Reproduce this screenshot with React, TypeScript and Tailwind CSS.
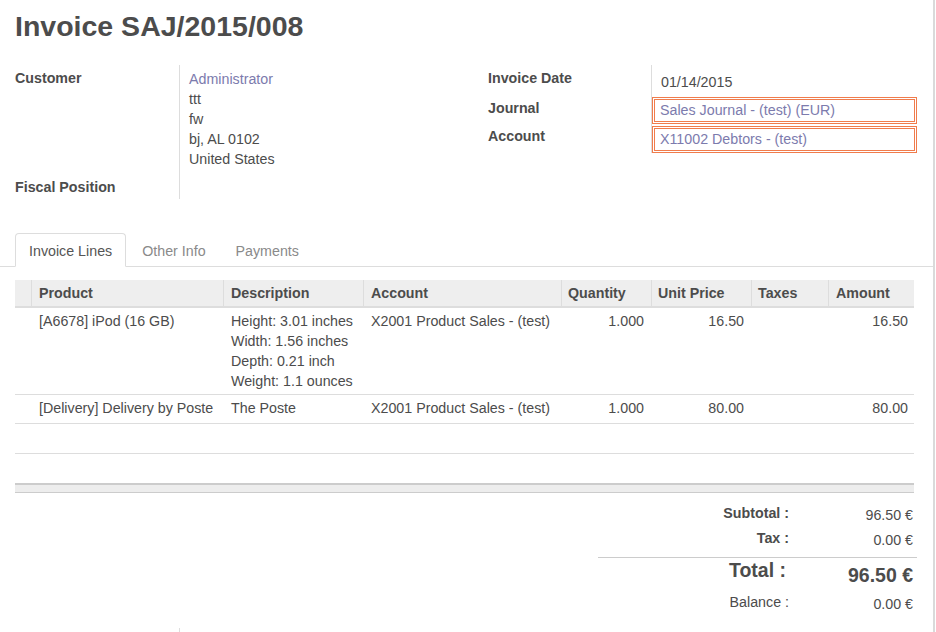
import React from "react";

const rows = [
  {
    product: "[A6678] iPod (16 GB)",
    desc: ["Height: 3.01 inches", "Width: 1.56 inches", "Depth: 0.21 inch", "Weight: 1.1 ounces"],
    account: "X2001 Product Sales - (test)",
    qty: "1.000",
    price: "16.50",
    taxes: "",
    amount: "16.50",
  },
  {
    product: "[Delivery] Delivery by Poste",
    desc: ["The Poste"],
    account: "X2001 Product Sales - (test)",
    qty: "1.000",
    price: "80.00",
    taxes: "",
    amount: "80.00",
  },
];

const cols = "grid grid-cols-[16px_192px_140px_198px_90px_100px_77px_86px]";

export default function App() {
  return (
    <div className="w-[936px] h-[632px] overflow-hidden bg-white flex font-['Liberation_Sans',Arial,sans-serif] text-[14.25px] leading-5 text-[#4c4c4c]">
      <div className="w-[935px] shrink-0 border-r-2 border-[#dadada]">
        {/* Title */}
        <div className="pl-[15px] pt-[10px]">
          <h1 className="text-[28.5px] leading-[32px] font-bold text-[#4c4c4c]">Invoice SAJ/2015/008</h1>
        </div>

        {/* Form groups */}
        <div className="flex items-start pl-[15px] mt-[23px]">
          <div className="w-[473px] grid grid-cols-[164px_1fr] content-start">
            <div className="pt-[3px] font-bold">Customer</div>
            <div className="border-l border-[#dddddd] pl-[9px] pt-[4px]">
              <div className="text-[#7c7bad]">Administrator</div>
              <div>ttt</div>
              <div>fw</div>
              <div>bj, AL 0102</div>
              <div>United States</div>
            </div>
            <div className="pt-[8px] font-bold">Fiscal Position</div>
            <div className="border-l border-[#dddddd] h-[30px]"></div>
          </div>
          <div className="w-[429px] grid grid-cols-[163px_1fr] content-start">
            <div className="pt-[3px] font-bold">Invoice Date</div>
            <div className="border-l border-[#dddddd] pl-[9px] pt-[7px] pb-[5px]">01/14/2015</div>
            <div className="pt-[1px] font-bold">Journal</div>
            <div className="border-l border-[#dddddd] pb-[2px]">
              <div className="border-[3px] border-double border-[#f07c4c] pl-[5px] pb-[1px] text-[#7c7bad]">
                Sales Journal - (test) (EUR)
              </div>
            </div>
            <div className="font-bold">Account</div>
            <div className="border-l border-[#dddddd]">
              <div className="border-[3px] border-double border-[#f07c4c] pl-[5px] pb-[1px] text-[#7c7bad]">
                X11002 Debtors - (test)
              </div>
            </div>
          </div>
        </div>

        {/* Tabs */}
        <div className="mt-[34px] flex pl-[15px] border-b border-[#dddddd]">
          <div className="-mb-px mr-[2px] border border-[#dddddd] border-b-white bg-white rounded-t-[4px] px-[13px] pt-[7px] pb-[5px] text-[#555555]">
            Invoice Lines
          </div>
          <div className="-mb-px mr-[2px] border border-transparent px-[13px] pt-[7px] pb-[5px] text-[#8a8a8a]">
            Other Info
          </div>
          <div className="-mb-px mr-[2px] border border-transparent px-[13px] pt-[7px] pb-[5px] text-[#8a8a8a]">
            Payments
          </div>
        </div>

        {/* Table */}
        <div className="ml-[15px] w-[899px] mt-[13px]">
          <div className={`${cols} bg-[#eeeeee] h-[28px] border-b-2 border-[#dddddd] font-bold`}>
            <div></div>
            <div className="border-l border-[#dddddd] pl-[7px] pt-[3px]">Product</div>
            <div className="border-l border-[#dddddd] pl-[7px] pt-[3px]">Description</div>
            <div className="border-l border-[#dddddd] pl-[7px] pt-[3px]">Account</div>
            <div className="border-l border-[#dddddd] pl-[6px] pt-[3px]">Quantity</div>
            <div className="border-l border-[#dddddd] pl-[6px] pt-[3px]">Unit Price</div>
            <div className="border-l border-[#dddddd] pl-[6px] pt-[3px]">Taxes</div>
            <div className="border-l border-[#dddddd] pl-[7px] pt-[3px]">Amount</div>
          </div>
          {rows.map((r, i) => (
            <div key={i} className={`${cols} min-h-[29px] border-b border-[#dddddd]`}>
              <div></div>
              <div className="pl-[8px] pt-[3px] pb-[3px]">{r.product}</div>
              <div className="pl-[8px] pt-[3px] pb-[3px]">
                {r.desc.map((d) => (
                  <div key={d}>{d}</div>
                ))}
              </div>
              <div className="pl-[8px] pt-[3px] pb-[3px]">{r.account}</div>
              <div className="pr-[7px] pt-[3px] pb-[3px] text-right">{r.qty}</div>
              <div className="pr-[7px] pt-[3px] pb-[3px] text-right">{r.price}</div>
              <div className="pr-[7px] pt-[3px] pb-[3px]">{r.taxes}</div>
              <div className="pr-[6px] pt-[3px] pb-[3px] text-right">{r.amount}</div>
            </div>
          ))}
          <div className="h-[30px] border-b border-[#dddddd]"></div>
          <div className="h-[29px]"></div>
          <div className="h-[10px] bg-[#ededed] border-t-2 border-b border-[#cccccc]"></div>
        </div>

        {/* Totals */}
        <div className="flex justify-end pr-[16px] mt-[10px]">
          <div className="w-[319px]">
            <div className="grid grid-cols-[191px_124px] h-[25px]">
              <div className="text-right font-bold">Subtotal :</div>
              <div className="text-right pt-[2px]">96.50 €</div>
            </div>
            <div className="grid grid-cols-[191px_124px] h-[25px]">
              <div className="text-right font-bold">Tax :</div>
              <div className="text-right pt-[2px]">0.00 €</div>
            </div>
            <div className="mt-[4px] border-t border-[#cccccc]"></div>
            <div className="grid grid-cols-[191px_124px] h-[34px]">
              <div className="text-right font-bold text-[19.5px] leading-6 pr-[3px]">Total :</div>
              <div className="text-right font-bold text-[19.5px] leading-6 pt-[5px]">96.50 €</div>
            </div>
            <div className="grid grid-cols-[191px_124px] h-[25px]">
              <div className="text-right">Balance :</div>
              <div className="text-right pt-[2px]">0.00 €</div>
            </div>
          </div>
        </div>
        <div className="mt-[11px] ml-[179px] h-[6px] border-l border-[#dddddd]"></div>
      </div>
    </div>
  );
}
